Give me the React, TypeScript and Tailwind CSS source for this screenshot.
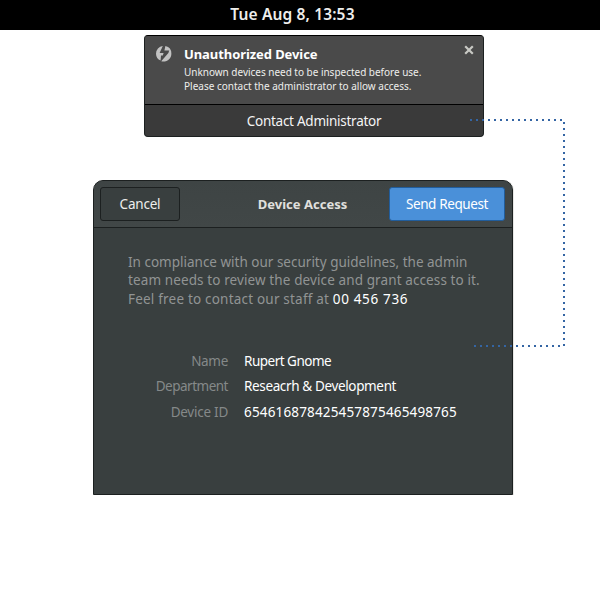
import React from "react";

const rows = [
  { label: "Name", labelClass: "tracking-[-0.3px]", value: "Rupert Gnome", valueClass: "tracking-[-0.5px]" },
  { label: "Department", labelClass: "tracking-[-0.5px]", value: "Reseacrh & Development", valueClass: "tracking-[-0.36px]" },
  { label: "Device ID", labelClass: "tracking-[-0.25px]", value: "654616878425457875465498765", valueClass: "tracking-[0.16px]" },
];

function ThunderboltIcon() {
  return (
    <svg className="mt-[10px] ml-[11px] h-4 w-4 shrink-0" viewBox="0 0 16 16" fill="#c2c2c2">
      <path d="M6.8 0 L3.6 7 H7.6 L6.8 9.4 H5 L4.6 14.6 A7.8 7.8 0 0 1 0 7.7 A7.8 7.8 0 0 1 6.8 0 Z" />
      <path d="M9.4 0.1 L8.4 4.4 H13.2 L12.4 7 L5.2 15.2 A7.8 7.8 0 0 0 15.4 7.7 A7.8 7.8 0 0 0 9.4 0.1 Z" />
    </svg>
  );
}

function Notification() {
  return (
    <section className="ml-[144px] mt-[5px] flex h-[102px] w-[340px] flex-col rounded-[4px] border border-[#1c2020] border-t-black bg-[#3a3a3a]">
      <div className="flex h-[69px] rounded-t-[3px] border-b border-black bg-[#4a4a4a]">
        <ThunderboltIcon />
        <div className="ml-[12px] flex-1 pt-[8px]">
          <h2 className="text-[13px] leading-5 font-bold tracking-[-0.08px] whitespace-nowrap text-white">Unauthorized Device</h2>
          <p className="mt-[2px] text-[10px] leading-[13.5px] whitespace-nowrap text-[#eeeeec]">
            <span className="tracking-[-0.02px]">Unknown devices need to be inspected before use.</span>
            <br />
            Please contact the administrator to allow access.
          </p>
        </div>
        <svg className="mt-[9px] mr-[9px] h-[10px] w-[10px] shrink-0" viewBox="0 0 10 10" fill="none" stroke="#c8c9c4" strokeWidth="2.2">
          <path d="M1.2 1.2 L8.8 8.8 M8.8 1.2 L1.2 8.8" />
        </svg>
      </div>
      <div className="flex flex-1 items-center justify-center pt-[2px] text-[13.5px] tracking-[-0.26px] whitespace-nowrap text-[#f4f4f4]">
        <span>Contact Administrator</span>
      </div>
    </section>
  );
}

function Dialog() {
  return (
    <section className="mt-[43px] ml-[93px] flex h-[315px] w-[420px] flex-col rounded-t-[10px] border border-[#1c2020] bg-[#393f3f] shadow-[1px_0_0_#e8e8e6]">
      <header className="grid h-[47px] grid-cols-[115px_1fr_115px] items-center rounded-t-[9px] border-b border-[#1c2020] bg-gradient-to-b from-[#3e4444] to-[#414747] pr-[8px] pl-[6px] text-[13.5px]">
        <button className="h-[34px] w-20 rounded-[3px] border border-[#1c2020] bg-[#393f3f] pt-px tracking-[-0.2px] text-[#eeeeec]">
          <span>Cancel</span>
        </button>
        <h1 className="pt-[2px] pl-[1px] text-center text-[13px] font-bold text-[#e0e0de]">
          <span>Device Access</span>
        </h1>
        <button className="h-[34px] w-[116px] rounded-[3px] border border-[#215d9c] bg-[#4a90d9] pt-px tracking-[-0.38px] whitespace-nowrap text-white">
          <span>Send Request</span>
        </button>
      </header>
      <p className="mt-[25px] ml-[34px] text-[13.5px] leading-[18.3px] whitespace-nowrap text-[#919494]">
        <span>In compliance with our security guidelines, the admin</span>
        <br />
        <span className="tracking-[0.11px]">team needs to review the device and grant access to it.</span>
        <br />
        <span className="tracking-[0.2px]">
          Feel free to contact our staff at <b className="font-normal tracking-[0.65px] text-white">00 456 736</b>
        </span>
      </p>
      <dl className="mt-[41px] grid grid-cols-[134px_1fr] gap-x-4 text-[13.5px] leading-[25.5px] whitespace-nowrap">
        {rows.map((row) => (
          <React.Fragment key={row.label}>
            <dt className={"text-right text-[#858989] " + row.labelClass}>{row.label}</dt>
            <dd className={"text-white " + row.valueClass}>{row.value}</dd>
          </React.Fragment>
        ))}
      </dl>
    </section>
  );
}

export default function App() {
  return (
    <main className="relative h-[600px] w-[600px] overflow-hidden bg-white font-['Noto_Sans',sans-serif]">
      <div className="flex h-[30px] items-center justify-center bg-black pr-[15px] text-[15.5px] font-semibold tracking-[0.14px] text-[#eeeeec]">
        <span>Tue Aug 8, 13:53</span>
      </div>
      <Notification />
      <Dialog />
      <svg className="pointer-events-none absolute inset-0" width="600" height="600" fill="none">
        <path d="M470 120 H564 V346 H474" stroke="#3465a4" strokeWidth="2" strokeDasharray="2 4" />
      </svg>
    </main>
  );
}
